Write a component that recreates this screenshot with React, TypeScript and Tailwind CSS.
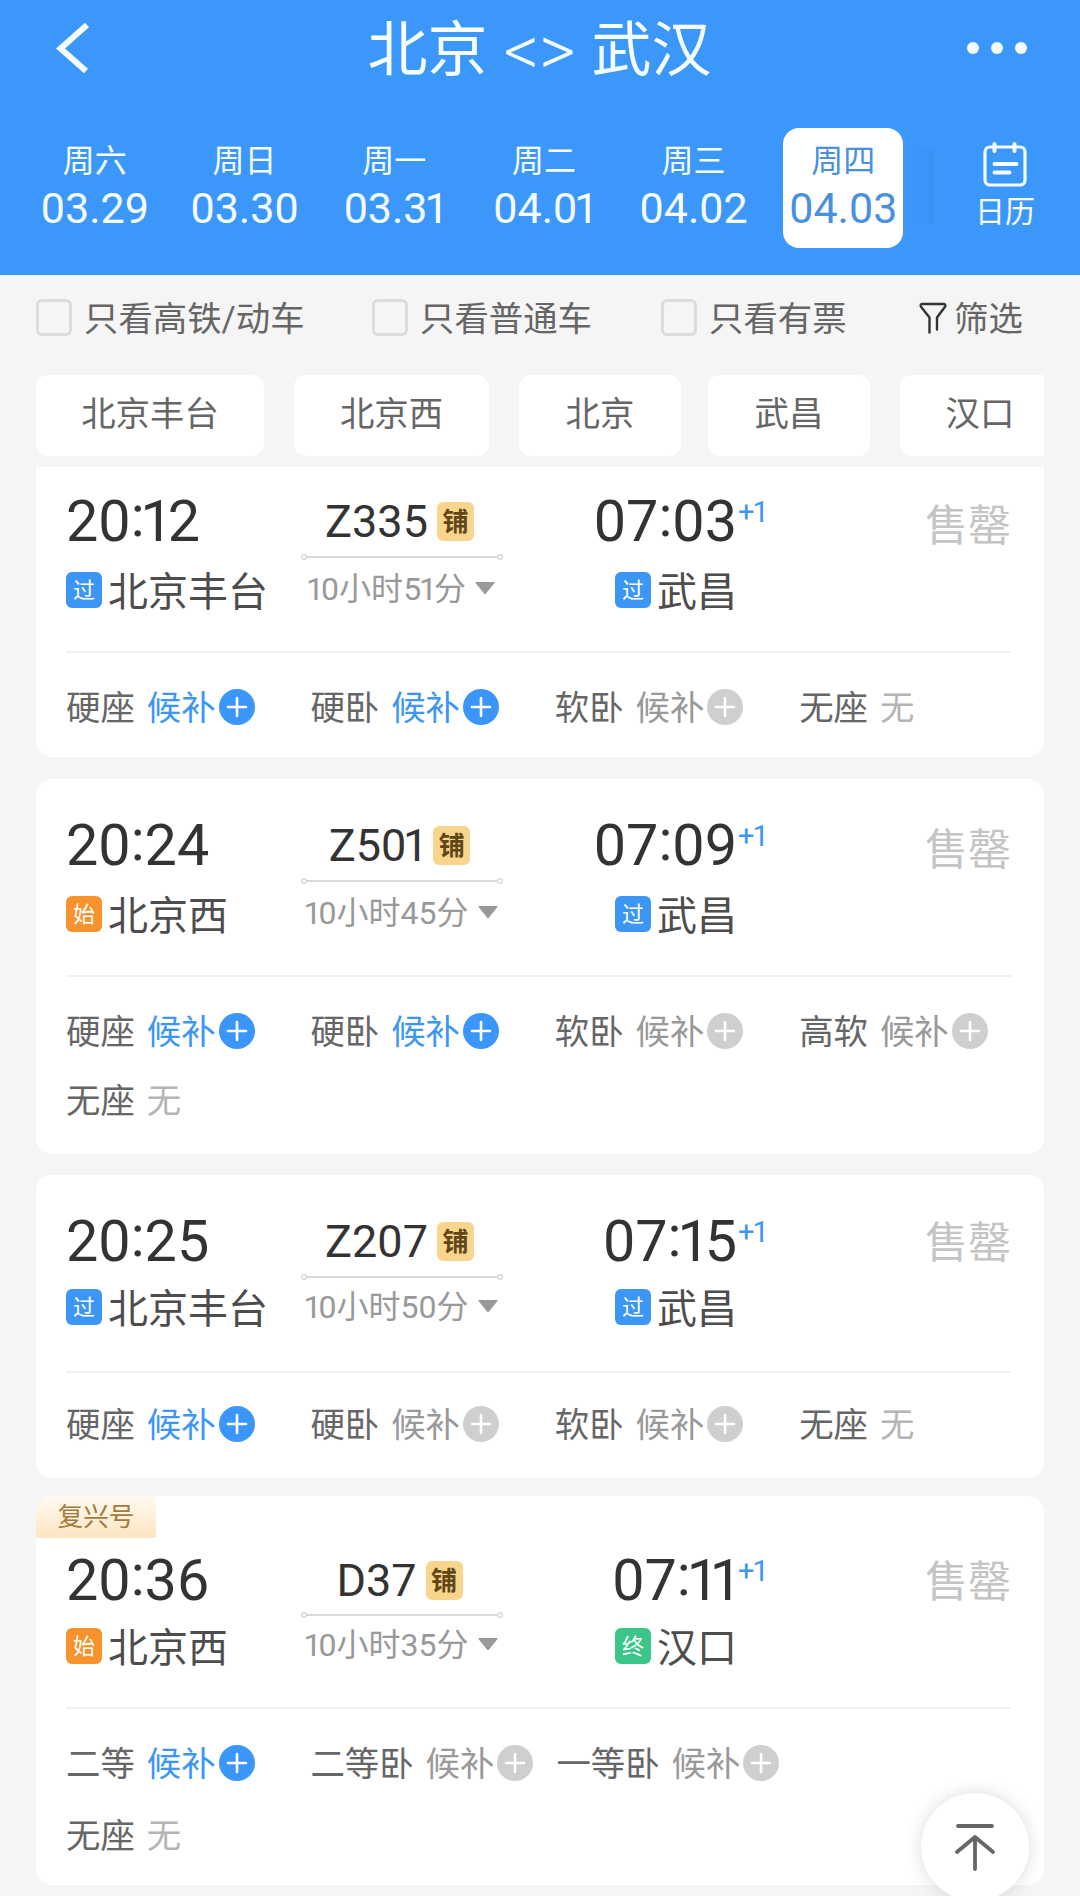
import clsx from 'clsx'

type StopKind = 'start' | 'pass' | 'end'

interface Seat {
  name: string
  status: 'open' | 'closed' | 'none'
}

interface Stop {
  time: string
  station: string
  kind: StopKind
}

interface Train {
  no: string
  duration: string
  from: Stop
  to: Stop
  seats: Seat[]
  tag?: string
  compact?: boolean
  cardClass: string
  dividerClass: string
  seatsClass: string
}

const DAYS = [
  { week: '周六', date: '03.29' },
  { week: '周日', date: '03.30' },
  { week: '周一', date: '03.31' },
  { week: '周二', date: '04.01' },
  { week: '周三', date: '04.02' },
  { week: '周四', date: '04.03', active: true },
]

const STATIONS = [
  { name: '北京丰台', box: 'w-[228px] mr-[30px]' },
  { name: '北京西', box: 'w-[195px] mr-[30px]' },
  { name: '北京', box: 'w-[162px] mr-[27px]' },
  { name: '武昌', box: 'w-[162px] mr-[30px]' },
  { name: '汉口', box: 'w-[160px]' },
]

const TRAINS: Train[] = [
  {
    no: 'Z335',
    duration: '10小时51分',
    from: { time: '20:12', station: '北京丰台', kind: 'pass' },
    to: { time: '07:03', station: '武昌', kind: 'pass' },
    seats: [
      { name: '硬座', status: 'open' },
      { name: '硬卧', status: 'open' },
      { name: '软卧', status: 'closed' },
      { name: '无座', status: 'none' },
    ],
    cardClass: 'h-[290px] pt-[33px] rounded-b-2xl mb-[22px]',
    dividerClass: 'mt-[43px]',
    seatsClass: 'mt-[36px] gap-y-[34px]',
  },
  {
    no: 'Z501',
    duration: '10小时45分',
    from: { time: '20:24', station: '北京西', kind: 'start' },
    to: { time: '07:09', station: '武昌', kind: 'pass' },
    seats: [
      { name: '硬座', status: 'open' },
      { name: '硬卧', status: 'open' },
      { name: '软卧', status: 'closed' },
      { name: '高软', status: 'closed' },
      { name: '无座', status: 'none' },
    ],
    cardClass: 'h-[375px] pt-[45px] rounded-2xl mb-[21px]',
    dividerClass: 'mt-[43px]',
    seatsClass: 'mt-[36px] gap-y-[33px]',
  },
  {
    no: 'Z207',
    duration: '10小时50分',
    compact: true,
    from: { time: '20:25', station: '北京丰台', kind: 'pass' },
    to: { time: '07:15', station: '武昌', kind: 'pass' },
    seats: [
      { name: '硬座', status: 'open' },
      { name: '硬卧', status: 'closed' },
      { name: '软卧', status: 'closed' },
      { name: '无座', status: 'none' },
    ],
    cardClass: 'h-[303px] pt-[45px] rounded-2xl mb-[18px]',
    dividerClass: 'mt-[43px]',
    seatsClass: 'mt-[33px] gap-y-[34px]',
  },
  {
    no: 'D37',
    duration: '10小时35分',
    tag: '复兴号',
    compact: true,
    from: { time: '20:36', station: '北京西', kind: 'start' },
    to: { time: '07:11', station: '汉口', kind: 'end' },
    seats: [
      { name: '二等', status: 'open' },
      { name: '二等卧', status: 'closed' },
      { name: '一等卧', status: 'closed' },
      { name: '无座', status: 'none' },
    ],
    cardClass: 'h-[389px] rounded-2xl',
    dividerClass: 'mt-[40px]',
    seatsClass: 'mt-[36px] gap-y-[36px]',
  },
]

const KIND_MAP: Record<StopKind, { label: string; color: string }> = {
  start: { label: '始', color: 'bg-[#f7922d]' },
  pass: { label: '过', color: 'bg-[#3b96f6]' },
  end: { label: '终', color: 'bg-[#3cc588]' },
}

// Figures with a narrow "1" and a raised colon
function Figures({ text }: { text: string }) {
  return (
    <>
      {text.split('').map((ch, i) => {
        const one = ch === '1'
        const beforeOne = text[i + 1] === '1'
        return (
          <span
            key={i}
            className={clsx(
              one && beforeOne && 'tracking-[-0.16em]',
              one && !beforeOne && 'tracking-[-0.09em]',
              !one && beforeOne && 'tracking-[-0.07em]',
              ch === ':' && 'relative -top-[0.08em]',
            )}
          >
            {ch}
          </span>
        )
      })}
    </>
  )
}

function CalendarIcon() {
  return (
    <svg className="w-[44px] h-[46px]" viewBox="0 0 44 46" fill="none" stroke="currentColor" strokeWidth="3.200" strokeLinecap="round">
      <rect x="2" y="5" width="40" height="38" rx="5" />
      <path d="M11.500 2v7M31.500 2v7" strokeWidth="4" />
      <path d="M11.500 22h22M11.500 30.500h15" strokeWidth="4" />
    </svg>
  )
}

function FunnelIcon() {
  return (
    <svg className="w-[28px] h-[32px]" viewBox="0 0 28 32" fill="none" stroke="#333" strokeWidth="2.400" strokeLinecap="round" strokeLinejoin="round">
      <path d="M10.500 30.500V15.500L1.800 4.500Q1 2 3.500 2h21Q27 2 26.200 4.500L18 15.500V27.500" />
    </svg>
  )
}

function Header() {
  return (
    <header className="h-[275px] bg-[#3c97fb] text-[#f6fdff] shrink-0">
      <div className="h-[96px] flex items-center justify-between pl-[56px] pr-[53px]">
        <svg className="w-[34px] h-[50px]" viewBox="0 0 34 50" fill="none" stroke="currentColor" strokeWidth="6">
          <path d="M31 2L4.500 25.500L30 48" />
        </svg>
        <h1 className="flex items-center pl-[22px] pt-[6px] text-[60px] leading-[90px]">
          <span>北京</span>
          <span className="mx-[16px] text-[70px] font-light">&lt;&gt;</span>
          <span>武汉</span>
        </h1>
        <svg className="w-[60px] h-[14px]" viewBox="0 0 60 14" fill="currentColor">
          <circle cx="6" cy="7" r="6" />
          <circle cx="30" cy="7" r="6" />
          <circle cx="54" cy="7" r="6" />
        </svg>
      </div>
      <div className="flex pt-[32px] pl-[20px]">
        {DAYS.map((day) => (
          <div key={day.date} className="w-[149.700px] flex justify-center">
            <div
              className={clsx(
                'w-[120px] h-[120px] flex flex-col items-center pt-[15px] rounded-2xl',
                day.active && 'bg-white text-[#4a90dc]',
              )}
            >
              <span className="text-[32px] leading-[36px]">{day.week}</span>
              <span className="text-[43px] leading-[58px] whitespace-nowrap">
                <Figures text={day.date} />
              </span>
            </div>
          </div>
        ))}
        <div className="w-[15px] h-[76px] mt-[20px] bg-linear-to-r from-[#3c97fb] to-[#3993f5]" />
        <div className="flex-1 flex flex-col items-center pt-[14px] pr-[3px]">
          <CalendarIcon />
          <span className="text-[30px] leading-[48px]">日历</span>
        </div>
      </div>
    </header>
  )
}

function Check({ label, className }: { label: string; className?: string }) {
  return (
    <label className={clsx('flex items-center gap-[12px]', className)}>
      <span className="w-[36px] h-[37px] rounded-md border-[3px] border-[#dcdcdc] shrink-0" />
      <span className="pt-[2px]">{label}</span>
    </label>
  )
}

function FilterBar() {
  return (
    <div className="h-[85px] pl-[36px] flex items-center text-[34.400px] leading-[80px] text-[#666] whitespace-nowrap shrink-0">
      <Check label="只看高铁/动车" className="w-[336px]" />
      <Check label="只看普通车" className="w-[289px]" />
      <Check label="只看有票" className="w-[258px]" />
      <span className="flex items-center gap-[7px]">
        <FunnelIcon />
        <span className="pt-[2px]">筛选</span>
      </span>
    </div>
  )
}

function StationTabs() {
  return (
    <div className="mt-[15px] mx-[36px] flex overflow-hidden shrink-0">
      {STATIONS.map((s) => (
        <div
          key={s.name}
          className={clsx(
            'h-[81px] bg-white rounded-xl shrink-0 text-center text-[34.400px] leading-[79px] text-[#666]',
            s.box,
          )}
        >
          {s.name}
        </div>
      ))}
    </div>
  )
}

function Station({ stop, compact }: { stop: Stop; compact?: boolean }) {
  const kind = KIND_MAP[stop.kind]
  return (
    <div
      className={clsx(
        'flex items-center gap-[6px] h-[36px] text-[40px] text-[#4d4d4d] whitespace-nowrap',
        compact ? 'mt-[27px]' : 'mt-[30px]',
      )}
    >
      <span className={clsx('w-[36px] h-[36px] rounded-md text-white text-[22px] leading-[37px] text-center', kind.color)}>
        {kind.label}
      </span>
      <span className="leading-[36px] pt-[5px]">{stop.station}</span>
    </div>
  )
}

function SeatItem({ seat }: { seat: Seat }) {
  return (
    <div className="min-w-[244.400px] pr-[23px] h-[36px] flex items-center text-[34.400px] leading-[36px] text-[#666] whitespace-nowrap">
      <span className="pt-[2px]">{seat.name}</span>
      <span
        className={clsx(
          'ml-[12px] pt-[2px]',
          seat.status === 'open' && 'text-[#3b96f6]',
          seat.status === 'closed' && 'text-[#999]',
          seat.status === 'none' && 'text-[#b5b5b5]',
        )}
      >
        {seat.status === 'none' ? '无' : '候补'}
      </span>
      {seat.status !== 'none' && (
        <svg className="w-[36px] h-[36px] ml-[3px]" viewBox="0 0 36 36">
          <circle cx="18" cy="18" r="18" fill={seat.status === 'open' ? '#3b96fb' : '#cfcfcf'} />
          <path d="M9 18h18M18 9v18" stroke="#fff" strokeWidth="2.600" strokeLinecap="round" />
        </svg>
      )}
    </div>
  )
}

function TrainCard({ train }: { train: Train }) {
  return (
    <section className={clsx('mx-[36px] px-[30px] bg-white overflow-hidden shrink-0', train.cardClass)}>
      {train.tag && (
        <div className="-ml-[30px] w-[120px] h-[42px] mb-[21px] bg-linear-to-b from-[#fffaf2] to-[#fde5c0] text-[25.600px] leading-[43px] text-center text-[#a37a3c]">
          {train.tag}
        </div>
      )}
      <div className="flex h-[108px]">
        <div className="w-[235px]">
          <div className="h-[42px] text-[57.500px] leading-[44px] text-[#333]">
            <Figures text={train.from.time} />
          </div>
          <Station stop={train.from} compact={train.compact} />
        </div>

        {/* Train number and duration */}
        <div className="w-[202px] flex flex-col items-center">
          <div className="h-[42px] flex items-center gap-[9px] pr-[5px] text-[45px] text-[#333]">
            <span className="leading-[42px] pt-[2px]">
              <Figures text={train.no} />
            </span>
            <span className="w-[37px] h-[39px] rounded-md bg-[#f8d48c] text-[26px] leading-[40px] font-bold text-[#5f4718] text-center">
              铺
            </span>
          </div>
          <svg
            className={clsx('w-[202px] h-[8px]', train.tag ? 'mt-[10px]' : 'mt-[11px]')}
            viewBox="0 0 202 8"
            fill="none"
            stroke="#d9d9d9"
            strokeWidth="1.500"
          >
            <circle cx="3" cy="4" r="2.300" />
            <circle cx="199" cy="4" r="2.300" />
            <path d="M5.500 4h191" strokeWidth="2" />
          </svg>
          <div
            className={clsx(
              'h-[36px] flex items-center gap-[9px] pr-[3px] text-[32px] leading-[36px] text-[#999] whitespace-nowrap',
              train.compact ? 'mt-[7px]' : 'mt-[9px]',
            )}
          >
            <span className="pt-[2px]">
              <Figures text={train.duration} />
            </span>
            <svg className="w-[20px] h-[12px]" viewBox="0 0 20 12" fill="#999">
              <path d="M1 0h18q1 0 .5 1L11 11.500q-1 1-2 0L.5 1Q0 0 1 0z" />
            </svg>
          </div>
        </div>

        <div className="w-[234px] flex flex-col items-end">
          <div className="h-[42px] relative text-[57.500px] leading-[44px] text-[#333]">
            <Figures text={train.to.time} />
            <span className="absolute left-full top-0 ml-[1px] text-[29px] leading-[25px] text-[#3b96f6]">
              <Figures text="+1" />
            </span>
          </div>
          <Station stop={train.to} compact={train.compact} />
        </div>

        <div
          className={clsx(
            'flex-1 pr-[3px] text-right text-[43px] text-[#c4c4c4]',
            train.compact ? 'leading-[47px]' : 'leading-[53px]',
          )}
        >
          售罄
        </div>
      </div>

      <div className={clsx('h-[2px] mr-[3px] bg-[#efefef]', train.dividerClass)} />
      <div className={clsx('flex flex-wrap -mr-[30px]', train.seatsClass)}>
        {train.seats.map((seat) => (
          <SeatItem key={seat.name} seat={seat} />
        ))}
      </div>
    </section>
  )
}

export default function App() {
  return (
    <div className="relative w-[1080px] h-[1896px] overflow-hidden flex flex-col bg-[#f5f5f5] font-['Roboto','Noto_Sans_CJK_SC',sans-serif]">
      <Header />
      <FilterBar />
      <StationTabs />
      <main className="mt-[11px] flex flex-col">
        {TRAINS.map((train) => (
          <TrainCard key={train.no} train={train} />
        ))}
      </main>

      {/* Back to top */}
      <button className="absolute left-[921px] top-[1793px] w-[108px] h-[108px] rounded-full bg-white shadow-[0_0_18px_rgba(0,0,0,0.14)] flex items-center justify-center">
        <svg className="w-[42px] h-[48px]" viewBox="0 0 42 48" fill="none" stroke="#666" strokeWidth="3.800" strokeLinecap="round" strokeLinejoin="round">
          <path d="M4 3h34M21 46V14M3 29L21 14L39 29" />
        </svg>
      </button>
    </div>
  )
}
